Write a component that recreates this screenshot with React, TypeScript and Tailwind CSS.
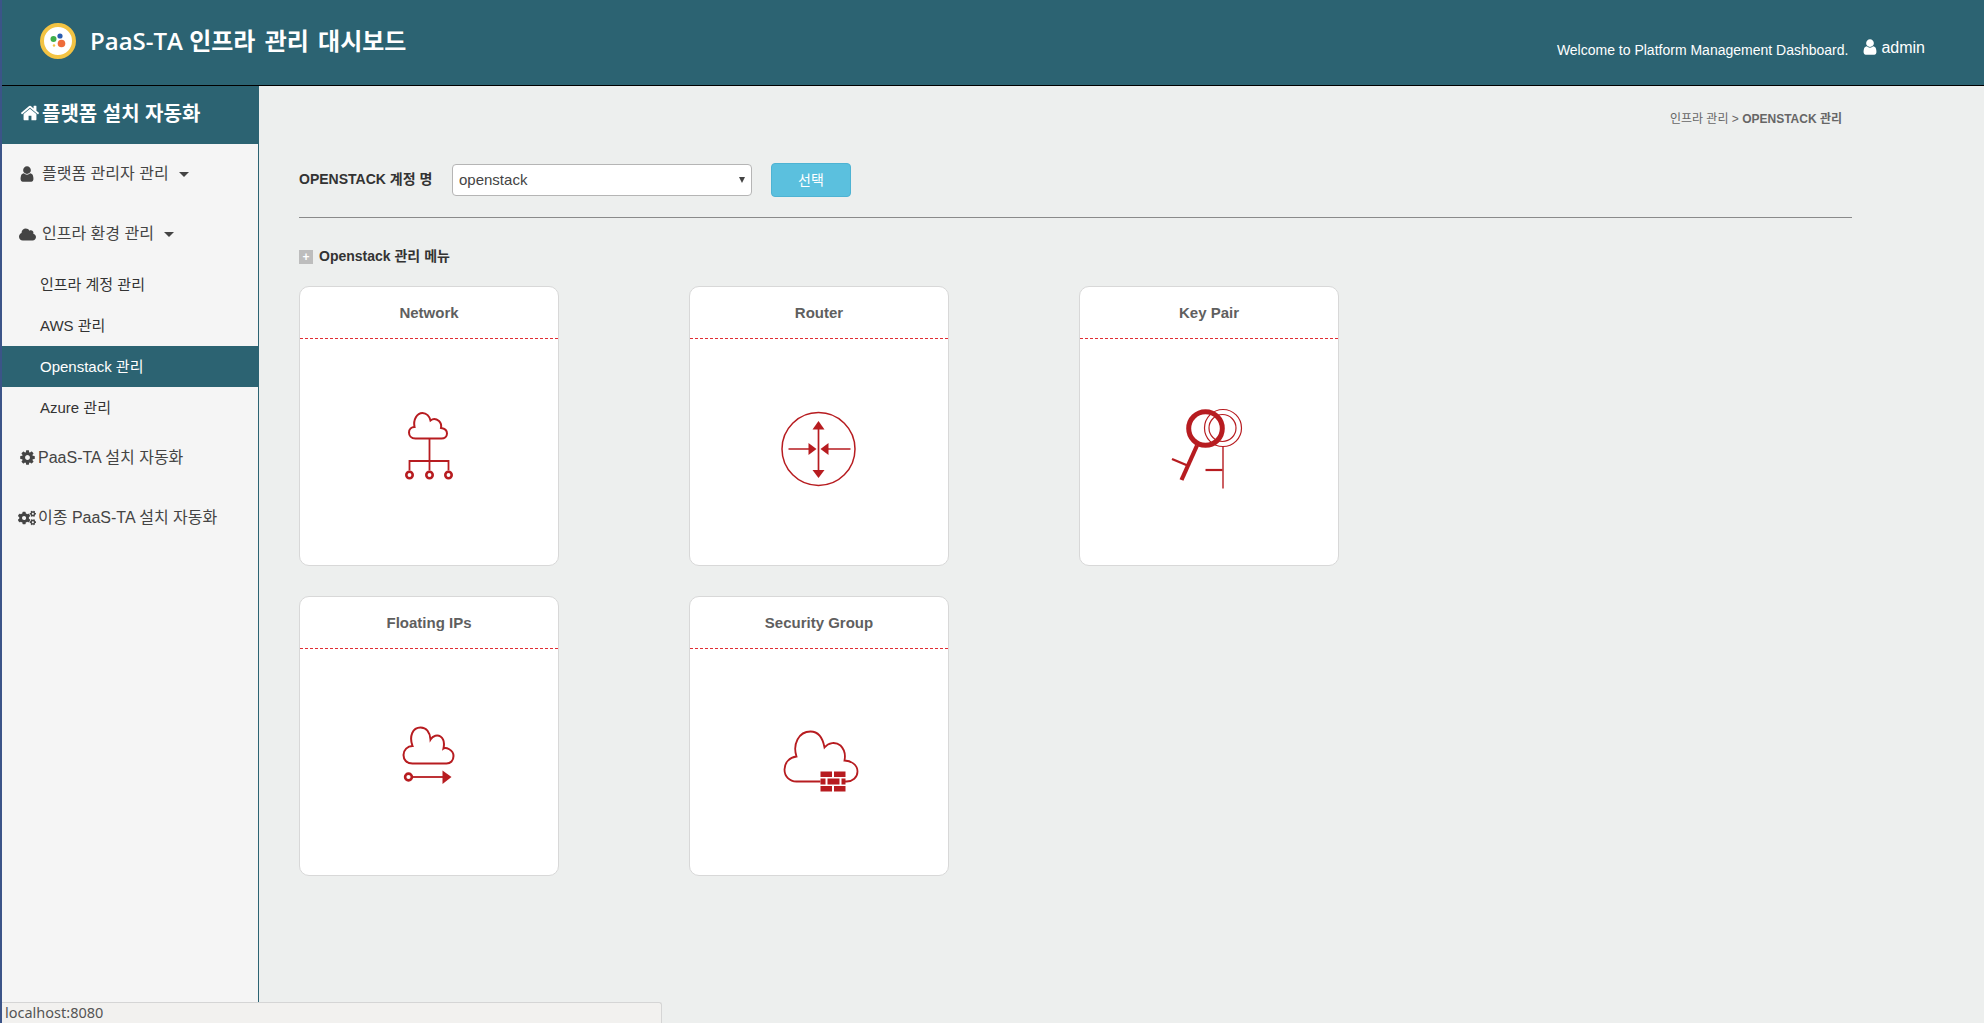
import { type ReactNode } from 'react'
import { FaCloud, FaCogs } from 'react-icons/fa'

const RED = '#b71c20'

function UserGlyph({ size, className }: { size: number; className?: string }) {
  return (
    <svg width={size} height={size} viewBox="0 0 1792 1792" fill="currentColor" className={className}>
      <path d="M1536 1399q0 109-62.5 187t-150.5 78h-854q-88 0-150.5-78t-62.5-187q0-85 8.5-160.5t31.5-152 58.5-131 94-89 134.5-34.5q131 128 313 128t313-128q76 0 134.5 34.5t94 89 58.5 131 31.5 152 8.5 160.5zm-256-887q0 159-112.5 271.5t-271.5 112.5-271.5-112.5-112.5-271.5 112.5-271.5 271.5-112.5 271.5 112.5 112.5 271.5z" />
    </svg>
  )
}

function HomeGlyph({ size, className }: { size: number; className?: string }) {
  return (
    <svg width={size} height={size} viewBox="0 0 1792 1792" fill="currentColor" className={className}>
      <path d="M1472 992v480q0 26-19 45t-45 19h-384v-384h-256v384h-384q-26 0-45-19t-19-45v-480q0-1 .5-3t.5-3l575-474 575 474q1 2 1 6zm223-69l-62 74q-8 9-21 11h-3q-13 0-21-7l-692-577-692 577q-12 8-24 7-13-2-21-11l-62-74q-8-10-7-23.5t11-21.5l719-599q32-26 76-26t76 26l244 204v-195q0-14 9-23t23-9h192q14 0 23 9t9 23v408l219 182q10 8 11 21.5t-7 23.5z" />
    </svg>
  )
}

function CogGlyph({ size, className }: { size: number; className?: string }) {
  return (
    <svg width={size} height={size} viewBox="0 0 1792 1792" fill="currentColor" className={className}>
      <path d="M1152 896q0-106-75-181t-181-75-181 75-75 181 75 181 181 75 181-75 75-181zm512-109v222q0 12-8 23t-20 13l-185 28q-19 54-39 91 35 50 107 138 10 12 10 25t-9 23q-27 37-99 108t-94 71q-12 0-26-9l-138-108q-44 23-91 38-16 136-29 186-7 28-36 28h-222q-14 0-24.5-8.5t-11.5-21.5l-28-184q-49-16-90-37l-141 107q-10 9-25 9-14 0-25-11-126-114-165-168-7-10-7-23 0-12 8-23 15-21 51-66.5t54-70.5q-27-50-41-99l-183-27q-13-2-21-12.5t-8-23.5v-222q0-12 8-23t19-13l186-28q14-46 39-92-40-57-107-138-10-12-10-24 0-10 9-23 26-36 98.5-107.5t94.5-71.5q13 0 26 10l138 107q44-23 91-38 16-136 29-186 7-28 36-28h222q14 0 24.5 8.5t11.5 21.5l28 184q49 16 90 37l142-107q9-9 24-9 13 0 25 10 129 119 165 170 7 8 7 22 0 12-8 23-15 21-51 66.5t-54 70.5q26 50 41 98l183 28q13 2 21 12.5t8 23.5z" />
    </svg>
  )
}

function NetworkIcon() {
  return (
    <svg width="100" height="90" viewBox="-1.5 7.5 100 90" fill="none" stroke={RED}>
      <path
        d="M35 39C30.5 39 28.5 36 28.5 33C28.5 29.5 31 27.5 34 27.5C32.5 20 36.5 13.5 42 13.5C46 13.5 49 17 50 21C52.5 19 56 19.5 58.5 21.5C60.5 23.5 61 26 60.5 28.5C64 29 66.5 31 66.5 34C66.5 37 64 39 61 39Z"
        strokeWidth="2"
      />
      <path d="M49 39V71M29 71V61.5H68V71" strokeWidth="1.8" />
      <circle cx="29" cy="75.5" r="3.2" strokeWidth="2.6" />
      <circle cx="49" cy="75.5" r="3.2" strokeWidth="2.6" />
      <circle cx="68" cy="75.5" r="3.2" strokeWidth="2.6" />
    </svg>
  )
}

function RouterIcon() {
  return (
    <svg width="100" height="90" viewBox="-1.5 7.5 100 90" fill="none" stroke={RED}>
      <circle cx="48" cy="49.5" r="36.5" strokeWidth="1.5" />
      <path d="M48 27V72M18 49.5H40M80 49.5H57" strokeWidth="1.7" />
      <g fill={RED} stroke="none">
        <path d="M48 21.5L42 30H54Z" />
        <path d="M48 78.5L42 70.5H54Z" />
        <path d="M46 49.5L38 43.5V55.5Z" />
        <path d="M50 49.5L58 43.5V55.5Z" />
      </g>
    </svg>
  )
}

function KeyPairIcon() {
  return (
    <svg width="100" height="90" viewBox="-1.5 7.5 100 90" fill="none" stroke={RED}>
      <circle cx="62.5" cy="28.5" r="18.5" strokeWidth="1.2" />
      <circle cx="62" cy="28.5" r="13.5" strokeWidth="1.2" />
      <path d="M62.5 47V89" strokeWidth="1.4" />
      <path d="M45 70.5H62" strokeWidth="2.2" />
      <circle cx="45" cy="29" r="16.8" strokeWidth="5" />
      <path d="M36.5 46L21 80.5" strokeWidth="4.2" />
      <path d="M11.5 59.5L27 66" strokeWidth="2.4" />
    </svg>
  )
}

function FloatingIcon() {
  return (
    <svg width="100" height="90" viewBox="-1.5 2.5 100 90" fill="none" stroke={RED}>
      <path
        d="M32 49C26 49 23 45 23 40.5C23 35.5 27 31.5 32 31.5C28.5 22 32 13 40 13C46 13 49.5 18 50 25C52.5 21 57 20 60 22C63 24 64 29 63 34C65 32.5 73 35 73 41.5C73 46 70 49 66 49Z"
        strokeWidth="2"
      />
      <circle cx="28" cy="62.5" r="3.4" strokeWidth="2.6" />
      <path d="M32 62.5H63" strokeWidth="1.8" />
      <path d="M71 62.5L62 56V69.5Z" fill={RED} stroke="none" />
    </svg>
  )
}

function SecurityIcon() {
  return (
    <svg width="100" height="90" viewBox="-1.5 2.5 100 90" fill="none" stroke={RED}>
      <path
        d="M50 67H26C19 67 14 62 14 55C14 48 19 43 26 42C22 30 28 17 40 17C47 17 52 22 54 33C58 28 65 27 70 31C74 35 75 41 74 46C80 46 87 50 87 57C87 63 82 67 76 67H72"
        strokeWidth="1.8"
      />
      <g fill={RED} stroke="none">
        <rect x="50" y="57" width="11.5" height="5.5" />
        <rect x="63.5" y="57" width="11.5" height="5.5" />
        <rect x="50" y="64" width="5" height="6" />
        <rect x="57" y="64" width="12" height="6" />
        <rect x="71" y="64" width="4" height="6" />
        <rect x="50" y="71.5" width="11.5" height="5.5" />
        <rect x="63.5" y="71.5" width="11.5" height="5.5" />
      </g>
    </svg>
  )
}

function MenuCard({ title, children }: { title: string; children: ReactNode }) {
  return (
    <div className="flex h-[280px] w-[260px] flex-col rounded-[10px] border border-[#d8d8d8] bg-white">
      <div className="flex h-[52px] items-center justify-center border-b border-dashed border-b-[#e02d33] pt-[1px] text-[15px] font-bold text-[#5f5f5f]">
        {title}
      </div>
      <div className="flex flex-1 items-center justify-center">{children}</div>
    </div>
  )
}

function SideGroup({ icon, label, caret }: { icon: ReactNode; label: string; caret?: boolean }) {
  return (
    <div className="flex h-[60px] items-center pl-[18px] text-[16px] text-[#444]">
      {icon}
      <span>{label}</span>
      {caret && <span className="ml-[10px] h-0 w-0 border-x-[5px] border-t-[5px] border-x-transparent border-t-[#444]" />}
    </div>
  )
}

function SideLink({ label, active }: { label: string; active?: boolean }) {
  return (
    <div
      className={
        active
          ? 'flex h-[41px] items-center bg-[#2c6372] pt-[1px] pl-[38px] text-[15px] text-white'
          : 'flex h-[41px] items-center pt-[1px] pl-[38px] text-[15px] text-[#333]'
      }
    >
      {label}
    </div>
  )
}

export default function App() {
  return (
    <div className="relative flex h-screen flex-col overflow-hidden border-l-2 border-l-[#3c5488] bg-[#edefee] font-['Liberation_Sans','Noto_Sans_CJK_KR',sans-serif]">
      <header className="flex h-[86px] shrink-0 items-start justify-between border-b border-b-black bg-[#2c6372] text-white">
        <div className="flex items-center pt-[22px] pl-[37px]">
          <svg width="38" height="38" viewBox="0 0 38 38">
            <circle cx="19" cy="19" r="16" fill="white" stroke="#f3c343" strokeWidth="4" />
            <circle cx="14.5" cy="17" r="3" fill="#3fae49" />
            <circle cx="21" cy="14" r="2.6" fill="#2a5db0" />
            <circle cx="22.5" cy="21.5" r="3.8" fill="#ee6c3a" />
            <circle cx="15" cy="23.5" r="1.2" fill="#f3c343" />
          </svg>
          <span className="ml-[13px] font-['Open_Sans','Noto_Sans_CJK_KR',sans-serif] text-[24px] font-semibold">
            PaaS-TA <span className="[word-spacing:3px]">인프라 관리 대시보드</span>
          </span>
        </div>
        <div className="flex items-start pt-[36px] pr-[59px]">
          <span className="mt-[4px] text-[14px]">Welcome to Platform Management Dashboard.</span>
          <UserGlyph size={18} className="mt-[2px] ml-[13px]" />
          <span className="ml-[2px] text-[16px]">admin</span>
        </div>
      </header>

      <div className="flex min-h-0 flex-1">
        <aside className="w-[257px] shrink-0 border-r border-r-[#2c6372] bg-[#f5f5f5]">
          <div className="flex h-[58px] items-center bg-[#2c6372] pb-[4px] pl-[18px] font-['Noto_Sans_CJK_KR',sans-serif] text-[20px] font-semibold text-white [word-spacing:1px]">
            <HomeGlyph size={20} className="mr-[2px]" />
            플랫폼 설치 자동화
          </div>
          <SideGroup icon={<UserGlyph size={18} className="mr-[6px] -ml-[2px]" />} label="플랫폼 관리자 관리" caret />
          <SideGroup icon={<FaCloud className="mr-[6px] -ml-[1px] text-[17px]" />} label="인프라 환경 관리" caret />
          <SideLink label="인프라 계정 관리" />
          <SideLink label="AWS 관리" />
          <SideLink label="Openstack 관리" active />
          <SideLink label="Azure 관리" />
          <SideGroup icon={<CogGlyph size={17} className="mr-[2px] -ml-[1px] -translate-y-[1px]" />} label="PaaS-TA 설치 자동화" />
          <SideGroup icon={<FaCogs className="mr-[2px] -ml-[2px] text-[18px]" />} label="이종 PaaS-TA 설치 자동화" />
        </aside>

        <main className="min-w-0 flex-1 pl-[40px]">
          <div className="w-[1553px]">
            <div className="flex h-[66px] items-center justify-end pr-[10px] text-[12px] text-[#666]">
              <span>인프라 관리 &gt;&nbsp;</span>
              <b>OPENSTACK 관리</b>
            </div>
            <div className="flex h-[66px] items-start border-b border-b-[#8a8a8a] pt-[12px]">
              <label className="mt-[5px] w-[153px] text-[14px] font-bold text-[#333]">OPENSTACK 계정 명</label>
              <div className="relative flex h-[32px] w-[300px] items-center rounded-[4px] border border-[#b5b5b5] bg-white pl-[6px] text-[15px] text-[#444]">
                openstack
                <span className="absolute top-[12px] right-[6px] h-0 w-0 border-x-[3.5px] border-t-[6px] border-x-transparent border-t-[#444]" />
              </div>
              <button type="button" className="-mt-[1px] ml-[19px] h-[34px] w-[80px] rounded-[4px] border border-[#4eb3d3] bg-[#5bc0de] text-[14px] text-white">
                선택
              </button>
            </div>
          </div>
          <div className="mt-[28px] flex items-center text-[14px] font-bold text-[#333]">
            <span className="mr-[6px] flex h-[14px] w-[14px] items-center justify-center bg-[#bdbdbd] text-[12px] leading-none text-white">+</span>
            Openstack 관리 메뉴
          </div>
          <div className="mt-[19px] grid w-fit grid-cols-[260px_260px_260px] gap-x-[130px] gap-y-[30px]">
            <MenuCard title="Network"><NetworkIcon /></MenuCard>
            <MenuCard title="Router"><RouterIcon /></MenuCard>
            <MenuCard title="Key Pair"><KeyPairIcon /></MenuCard>
            <MenuCard title="Floating IPs"><FloatingIcon /></MenuCard>
            <MenuCard title="Security Group"><SecurityIcon /></MenuCard>
          </div>
        </main>
      </div>

      {/* browser link preview, sits over the page */}
      <div className="absolute bottom-0 -left-[2px] flex h-[21px] w-[662px] items-center rounded-tr-[3px] border-t border-r border-[#d5d5d5] bg-[#f2f1ef] pl-[5px] font-['Noto_Sans',sans-serif] text-[14.5px] text-[#555]">
        localhost:8080
      </div>
    </div>
  )
}
